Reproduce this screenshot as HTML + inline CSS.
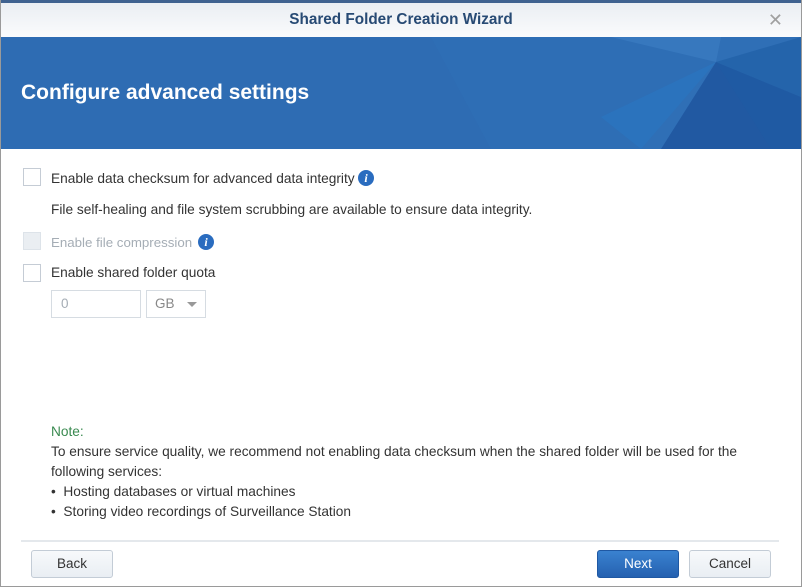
<!DOCTYPE html>
<html><head><style>
*{margin:0;padding:0;box-sizing:border-box}
body{width:802px;height:587px;background:#fff;font-family:"Liberation Sans",sans-serif;position:relative;overflow:hidden}
.win{position:absolute;left:0;top:0;width:802px;height:587px;border:1px solid #9a9a9a;border-top:none}
.topline{position:absolute;left:0;top:0;width:802px;height:3px;background:#3f6290}
.tbar{position:absolute;left:1px;top:3px;width:800px;height:34px;background:linear-gradient(#eaeef3,#fafbfc);text-align:center;font-weight:bold;font-size:15.3px;color:#274a74;line-height:34px}
.x{position:absolute;right:18px;top:0;color:#a0a0a0;font-weight:normal;font-size:18px}
.hdr{position:absolute;left:1px;top:37px;width:800px;height:112px;background:#2e6cb3;overflow:hidden}
.hdr h1{position:absolute;left:20px;top:44px;color:#fff;font-size:21px;font-weight:bold}
.t{position:absolute;font-size:13.7px;color:#333;white-space:nowrap}
.cb{position:absolute;width:18px;height:18px;border:1px solid #c5ccd5;background:#fff}
.info{position:absolute;width:16px;height:16px;border-radius:50%;background:#2a6cbf;color:#fff;font:italic bold 12px "Liberation Serif",serif;text-align:center;line-height:16px}
.btn{position:absolute;top:550px;height:28px;border:1px solid #c3ccd6;border-radius:3px;background:linear-gradient(#f7f9fb,#e9eef3);font-size:13.5px;color:#333;text-align:center;line-height:26px}
</style></head><body>
<div class="topline"></div>
<div class="tbar">Shared Folder Creation Wizard<span class="x">✕</span></div>
<div class="hdr">
<svg width="800" height="112" style="position:absolute;left:0;top:0">
<polygon points="430,0 800,0 800,112 490,112" fill="#2f6fb6"/>
<polygon points="620,0 715,25 600,80 640,112 490,112 430,0" fill="#2e6eb5"/>
<polygon points="715,25 800,0 800,60" fill="#2464ab"/>
<polygon points="600,80 715,25 640,112" fill="#2b73bd"/>
<polygon points="715,25 800,112 660,112" fill="#2159a2"/>
<polygon points="715,25 770,112 800,112 800,60" fill="#1f5aa3"/>
<polygon points="610,0 715,25 720,0" fill="#3a7bc0" opacity="0.8"/>
</svg>
<h1>Configure advanced settings</h1>
</div>
<div class="win"></div>
<div class="cb" style="left:23px;top:168px"></div>
<div class="t" style="left:51px;top:171px">Enable data checksum for advanced data integrity</div>
<div class="info" style="left:358px;top:170px">i</div>
<div class="t" style="left:51px;top:202px">File self-healing and file system scrubbing are available to ensure data integrity.</div>
<div class="cb" style="left:23px;top:232px;background:#eaeef2;border-color:#dde3e9"></div>
<div class="t" style="left:51px;top:235px;color:#a5adb5;font-size:13.3px">Enable file compression</div>
<div class="info" style="left:198px;top:234px">i</div>
<div class="cb" style="left:23px;top:264px"></div>
<div class="t" style="left:51px;top:265px">Enable shared folder quota</div>
<div style="position:absolute;left:51px;top:290px;width:90px;height:28px;border:1px solid #d6dce2;font-size:13.5px;color:#a5adb5;padding-left:9px;line-height:26px">0</div>
<div style="position:absolute;left:146px;top:290px;width:60px;height:28px;border:1px solid #d6dce2;font-size:13.5px;color:#888;padding-left:8px;line-height:26px">GB<span style="position:absolute;left:40px;top:11px;border-left:5px solid transparent;border-right:5px solid transparent;border-top:5px solid #999"></span></div>
<div class="t" style="left:51px;top:424px;color:#3a8a50">Note:</div>
<div class="t" style="left:51px;top:444px">To ensure service quality, we recommend not enabling data checksum when the shared folder will be used for the</div>
<div class="t" style="left:51px;top:464px">following services:</div>
<div class="t" style="left:51px;top:484px">•&nbsp; Hosting databases or virtual machines</div>
<div class="t" style="left:51px;top:504px">•&nbsp; Storing video recordings of Surveillance Station</div>
<div style="position:absolute;left:21px;top:540px;width:758px;height:2px;background:#e4e8ec"></div>
<div class="btn" style="left:31px;width:82px">Back</div>
<div class="btn" style="left:597px;width:82px;background:linear-gradient(#3a82d0,#2561b0);border-color:#1f58a3;color:#fff">Next</div>
<div class="btn" style="left:689px;width:82px">Cancel</div>
</body></html>
